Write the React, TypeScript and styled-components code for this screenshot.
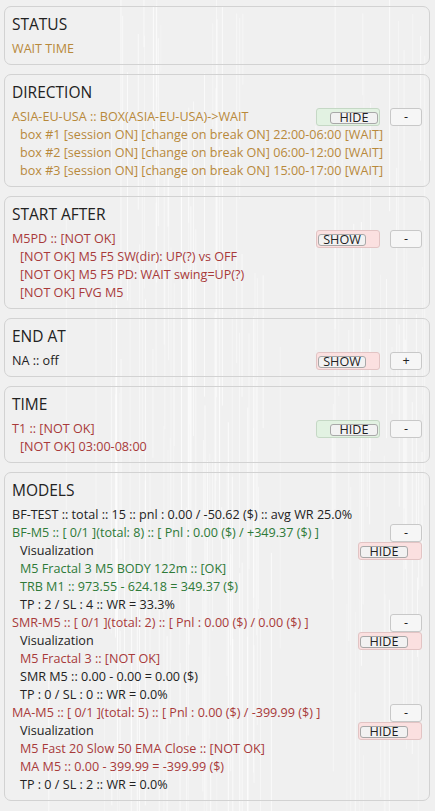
import React from "react";
import styled, { createGlobalStyle } from "styled-components";

const GOLD = "#b8893b";
const RED = "#a83a3a";
const GREEN = "#2e7a38";
const DARK = "#222222";

const Global = createGlobalStyle`
  html, body { margin: 0; padding: 0; background: #f0f0f0; }
  body { font-family: "Open Sans", "Noto Sans", sans-serif; color: ${DARK}; }
`;

const Page = styled.div`
  position: relative;
  width: 435px;
  min-height: 811px;
  box-sizing: border-box;
  padding: 6px 5px 8px 4px;
  display: flex;
  flex-direction: column;
  gap: 9px;
  overflow: hidden;
`;

const Backdrop = styled.svg`
  position: absolute;
  left: 0;
  top: 0;
  width: 435px;
  height: 811px;
  pointer-events: none;
  z-index: 0;
`;

const Panel = styled.section`
  position: relative;
  z-index: 1;
  border: 1px solid #d2d2d2;
  border-radius: 7px;
  padding: 6px 7px 6px 7px;
  display: flex;
  flex-direction: column;
`;

const Title = styled.div`
  font-size: 15.5px;
  line-height: 23px;
  height: 23px;
  margin-bottom: 4px;
  color: ${DARK};
`;

const Row = styled.div<{ $indent?: boolean; $color: string }>`
  display: flex;
  align-items: center;
  justify-content: space-between;
  height: 18px;
  font-size: 12.6px;
  line-height: 18px;
  white-space: nowrap;
  color: ${(p) => p.$color};
  padding-left: ${(p) => (p.$indent ? "8px" : "0")};
`;

const RowText = styled.span``;

const Controls = styled.div`
  display: flex;
  gap: 10px;
  align-items: center;
`;

const ToggleOuter = styled.div<{ $on: boolean }>`
  box-sizing: border-box;
  width: 64px;
  height: 18px;
  border: 1px solid ${(p) => (p.$on ? "#c5d8c5" : "#e2c4c4")};
  border-radius: 3px;
  background: ${(p) => (p.$on ? "#e2f2e2" : "#fbe0e0")};
  display: flex;
  align-items: center;
  justify-content: ${(p) => (p.$on ? "flex-end" : "flex-start")};
  padding: 0 1px;
`;

const ToggleInner = styled.div`
  box-sizing: border-box;
  width: 48px;
  height: 12px;
  margin-top: 1px;
  border: 1px solid #a8a8a8;
  border-radius: 3px;
  background: #f2f2f2;
  display: flex;
  justify-content: center;
  align-items: center;
  font-size: 12.6px;
  line-height: 10px;
  color: ${DARK};
  overflow: visible;
`;

const SmallBtn = styled.div`
  box-sizing: border-box;
  width: 32px;
  height: 18px;
  border: 1px solid #c8c8c8;
  border-radius: 3px;
  background: #f6f6f6;
  display: flex;
  align-items: center;
  justify-content: center;
  font-size: 12.6px;
  color: ${DARK};
`;

type Toggle = { label: string; on: boolean };
type Line = {
  text: string;
  color: string;
  indent?: boolean;
  toggle?: Toggle;
  btn?: string;
};
type Section = { title: string; lines: Line[] };

const sections: Section[] = [
  { title: "STATUS", lines: [{ text: "WAIT TIME", color: GOLD }] },
  {
    title: "DIRECTION",
    lines: [
      {
        text: "ASIA-EU-USA :: BOX(ASIA-EU-USA)->WAIT",
        color: GOLD,
        toggle: { label: "HIDE", on: true },
        btn: "-",
      },
      { text: "box #1 [session ON] [change on break ON] 22:00-06:00 [WAIT]", color: GOLD, indent: true },
      { text: "box #2 [session ON] [change on break ON] 06:00-12:00 [WAIT]", color: GOLD, indent: true },
      { text: "box #3 [session ON] [change on break ON] 15:00-17:00 [WAIT]", color: GOLD, indent: true },
    ],
  },
  {
    title: "START AFTER",
    lines: [
      { text: "M5PD :: [NOT OK]", color: RED, toggle: { label: "SHOW", on: false }, btn: "-" },
      { text: "[NOT OK] M5 F5 SW(dir): UP(?) vs OFF", color: RED, indent: true },
      { text: "[NOT OK] M5 F5 PD: WAIT swing=UP(?)", color: RED, indent: true },
      { text: "[NOT OK] FVG M5", color: RED, indent: true },
    ],
  },
  {
    title: "END AT",
    lines: [{ text: "NA :: off", color: DARK, toggle: { label: "SHOW", on: false }, btn: "+" }],
  },
  {
    title: "TIME",
    lines: [
      { text: "T1 :: [NOT OK]", color: RED, toggle: { label: "HIDE", on: true }, btn: "-" },
      { text: "[NOT OK] 03:00-08:00", color: RED, indent: true },
    ],
  },
  {
    title: "MODELS",
    lines: [
      { text: "BF-TEST :: total :: 15 :: pnl : 0.00 / -50.62 ($) :: avg WR 25.0%", color: DARK },
      { text: "BF-M5 :: [ 0/1 ](total: 8) :: [ Pnl : 0.00 ($) / +349.37 ($) ]", color: GREEN, btn: "-" },
      { text: "Visualization", color: DARK, indent: true, toggle: { label: "HIDE", on: false } },
      { text: "M5 Fractal 3 M5 BODY 122m :: [OK]", color: GREEN, indent: true },
      { text: "TRB M1 :: 973.55 - 624.18 = 349.37 ($)", color: GREEN, indent: true },
      { text: "TP : 2 / SL : 4 :: WR = 33.3%", color: DARK, indent: true },
      { text: "SMR-M5 :: [ 0/1 ](total: 2) :: [ Pnl : 0.00 ($) / 0.00 ($) ]", color: RED, btn: "-" },
      { text: "Visualization", color: DARK, indent: true, toggle: { label: "HIDE", on: false } },
      { text: "M5 Fractal 3 :: [NOT OK]", color: RED, indent: true },
      { text: "SMR M5 :: 0.00 - 0.00 = 0.00 ($)", color: DARK, indent: true },
      { text: "TP : 0 / SL : 0 :: WR = 0.0%", color: DARK, indent: true },
      { text: "MA-M5 :: [ 0/1 ](total: 5) :: [ Pnl : 0.00 ($) / -399.99 ($) ]", color: RED, btn: "-" },
      { text: "Visualization", color: DARK, indent: true, toggle: { label: "HIDE", on: false } },
      { text: "M5 Fast 20 Slow 50 EMA Close :: [NOT OK]", color: RED, indent: true },
      { text: "MA M5 :: 0.00 - 399.99 = -399.99 ($)", color: RED, indent: true },
      { text: "TP : 0 / SL : 2 :: WR = 0.0%", color: DARK, indent: true },
    ],
  },
];

function seeded(seed: number) {
  let s = seed;
  return () => {
    s = (s * 16807) % 2147483647;
    return (s - 1) / 2147483646;
  };
}

const streaks = (() => {
  const r = seeded(42);
  const out: { x: number; y1: number; y2: number; o: number }[] = [];
  for (let i = 0; i < 170; i++) {
    const cluster = r();
    let x: number;
    if (cluster < 0.55) x = 110 + r() * 150;
    else if (cluster < 0.85) x = 330 + r() * 95;
    else x = 20 + r() * 400;
    const len = 40 + r() * 420;
    const y1 = r() * 811 - 50;
    out.push({ x, y1, y2: y1 + len, o: 0.25 + r() * 0.5 });
  }
  return out;
})();

function ToggleButton({ t }: { t: Toggle }) {
  return (
    <ToggleOuter $on={t.on}>
      <ToggleInner>{t.label}</ToggleInner>
    </ToggleOuter>
  );
}

export default function App() {
  return (
    <>
      <Global />
      <Page>
        <Backdrop viewBox="0 0 435 811">
          {streaks.map((s, i) => (
            <line key={i} x1={s.x} x2={s.x} y1={s.y1} y2={s.y2} stroke="#ffffff" strokeOpacity={s.o} strokeWidth={1} />
          ))}
        </Backdrop>
        {sections.map((sec) => (
          <Panel key={sec.title}>
            <Title>{sec.title}</Title>
            {sec.lines.map((l, i) => (
              <Row key={i} $indent={l.indent} $color={l.color}>
                <RowText>{l.text}</RowText>
                {(l.toggle || l.btn) && (
                  <Controls>
                    {l.toggle && <ToggleButton t={l.toggle} />}
                    {l.btn && <SmallBtn>{l.btn}</SmallBtn>}
                  </Controls>
                )}
              </Row>
            ))}
          </Panel>
        ))}
      </Page>
    </>
  );
}
